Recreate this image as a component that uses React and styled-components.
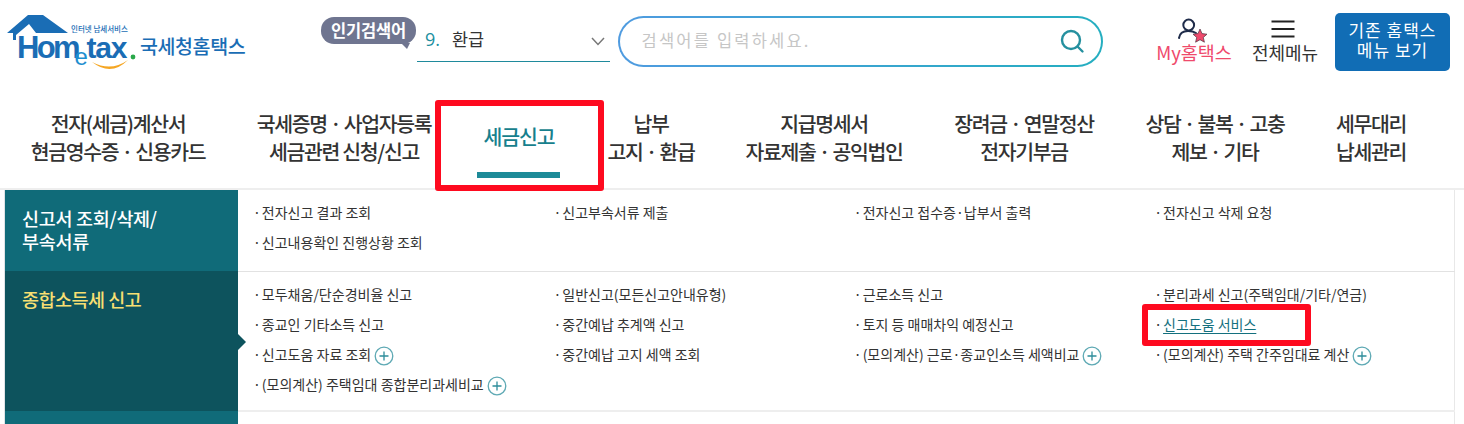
import React from "react";
import styled, { createGlobalStyle } from "styled-components";

const Global = createGlobalStyle`
  html, body { margin: 0; padding: 0; background: #fff; }
  body { width: 1464px; height: 424px; overflow: hidden; font-family: "Noto Sans CJK KR", "Noto Sans", sans-serif; color: #333; }
  #root { width: 1464px; height: 424px; overflow: hidden; }
  * { box-sizing: border-box; }
`;

const Page = styled.div`
  position: relative;
  width: 1464px;
  height: 424px;
  overflow: hidden;
`;

/* ---- top bar ---- */
const TopBar = styled.header`
  display: flex;
  align-items: flex-start;
  height: 89px;
  padding: 12px 14px 0 7px;
`;
const LogoWrap = styled.a`
  display: block;
  width: 314px;
  height: 62px;
  flex: none;
`;
const Popular = styled.div`
  display: flex;
  align-items: flex-start;
  width: 289px;
  flex: none;
`;
const Bubble = styled.div`
  position: relative;
  width: 95px;
  height: 27px;
  margin-top: 5px;
  margin-right: 1px;
  border-radius: 13px;
  background: #6f7590;
  color: #fff;
  font-size: 16.5px;
  font-weight: 700;
  line-height: 26px;
  text-align: center;
  letter-spacing: -0.2px;
  flex: none;
  &::after {
    content: "";
    position: absolute;
    right: 6px;
    bottom: -5px;
    border-top: 6px solid #6f7590;
    border-left: 6px solid transparent;
    border-right: 3px solid transparent;
  }
`;
const Select = styled.div`
  display: flex;
  align-items: center;
  width: 193px;
  height: 50px;
  border-bottom: 1px solid #1f8a9c;
  padding: 4px 5px 0 8px;
  flex: none;
  svg { margin-top: 6px; }
`;
const Rank = styled.span`
  color: #1d8f9f;
  font-family: "Open Sans", sans-serif;
  width: 27px;
  font-size: 18px;
`;
const Keyword = styled.span`
  flex: 1;
  color: #333;
  font-size: 17.5px;
`;
const SearchBox = styled.div`
  display: flex;
  align-items: center;
  width: 485px;
  height: 51px;
  margin-top: 4px;
  margin-left: 8px;
  padding: 0 16px 2px 21.5px;
  border-radius: 26px;
  border: 2.5px solid transparent;
  background:
    linear-gradient(#fff, #fff) padding-box,
    linear-gradient(90deg, #4f9be0, #24aec0) border-box;
  flex: none;
`;
const Placeholder = styled.span`
  flex: 1;
  color: #c6c6c6;
  font-size: 16.5px;
  letter-spacing: 2.2px;
  padding-bottom: 2px;
`;
const Utility = styled.a`
  display: flex;
  flex-direction: column;
  align-items: center;
  flex: none;
  width: ${(p) => p.$w}px;
  margin-left: ${(p) => p.$ml}px;
  color: ${(p) => p.$color};
  font-size: ${(p) => p.$size}px;
  line-height: 20px;
  white-space: nowrap;
`;
const UtilityIcon = styled.div`
  height: 24px;
  margin-top: 6px;
  margin-right: ${(p) => p.$shift}px;
  svg { display: block; }
`;
const OldMenu = styled.a`
  display: block;
  flex: none;
  width: 115px;
  height: 58px;
  margin-left: 15px;
  margin-top: 1px;
  border-radius: 5px;
  background: #116db5;
  color: #fff;
  font-size: 17px;
  line-height: 20px;
  letter-spacing: 1px;
  text-align: center;
  padding-top: 7px;
`;

/* ---- main navigation ---- */
const Nav = styled.nav`
  display: flex;
  height: 101px;
  border-bottom: 2px solid #eeeeee;
  padding-top: 20px;
`;
const NavItem = styled.a`
  position: relative;
  flex: none;
  width: ${(p) => p.$w}px;
  color: ${(p) => (p.$active ? "#177f8d" : "#333")};
  font-size: 20.5px;
  font-weight: 500;
  line-height: 28px;
  letter-spacing: ${(p) => (p.$active ? -1.1 : -1.35)}px;
  text-align: center;
  white-space: nowrap;
  padding-top: ${(p) => (p.$active ? 13 : 0)}px;
  ${(p) =>
    p.$active &&
    `&::after {
      content: "";
      position: absolute;
      left: 25px;
      top: 63px;
      width: 83px;
      height: 6px;
      background: #1d8a98;
    }`}
`;

/* ---- sub menu panel ---- */
const Panel = styled.section`
  margin-left: 4px;
  width: 1451px;
  border-left: 1px solid #dfe3e6;
  border-right: 1px solid #e8e8e8;
`;
const Row = styled.div`
  display: flex;
  height: ${(p) => p.$h}px;
`;
const Side = styled.h3`
  position: relative;
  flex: none;
  width: 233px;
  margin: 0;
  padding: 17px 0 0 17px;
  background: ${(p) => (p.$active ? "#0d535d" : "#106b79")};
  color: ${(p) => (p.$active ? "#f7df72" : "#fff")};
  font-size: 18.5px;
  font-weight: 500;
  line-height: 23px;
  letter-spacing: ${(p) => (p.$active ? -0.5 : -0.3)}px;
  ${(p) =>
    p.$active &&
    `&::after {
      content: "";
      position: absolute;
      right: -8px;
      top: 63px;
      border-left: 8px solid #0d535d;
      border-top: 8px solid transparent;
      border-bottom: 8px solid transparent;
    }`}
`;
const Links = styled.ul`
  flex: 1;
  display: grid;
  grid-template-columns: repeat(4, 300.4px);
  grid-auto-rows: 30px;
  align-content: start;
  margin: 0 0 -1px;
  padding: ${(p) => (p.$line ? 7 : 8)}px 0 0 15px;
  list-style: none;
  border-bottom: ${(p) => (p.$line ? "1px solid #e2e2e2" : "2px solid #eeeeee")};
`;
const LinkItem = styled.li`
  display: flex;
  align-items: center;
  font-size: 14px;
  color: #333;
  white-space: nowrap;
  &::before {
    content: "·";
    margin-right: 1px;
  }
`;
const Current = styled.a`
  color: #14707e;
  text-decoration: underline;
  text-underline-offset: 3px;
  text-decoration-thickness: 1px;
`;
const Last = styled.div`
  height: 14px;
  width: 233px;
  background: #106b79;
`;

/* ---- annotation overlays ---- */
const Highlight = styled.div`
  position: absolute;
  left: ${(p) => p.$x}px;
  top: ${(p) => p.$y}px;
  width: ${(p) => p.$w}px;
  height: ${(p) => p.$h}px;
  border: ${(p) => p.$b}px solid #fe0a1f;
  border-radius: 3px;
`;

/* ---- drawings ---- */
const Logo = () => (
  <svg width="245" height="62" viewBox="0 0 245 62" style={{ display: "block" }}>
    <path d="M0 21 L21 3 H36 L61 21 H29 L22 12 L9 23 V28 H6 V21 Z" fill="#1a6db5" />
    <text x="10" y="46" fontFamily="Liberation Sans, sans-serif" fontWeight="700" fontSize="31" letterSpacing="-2.6" fill="#1a6db5">Hom</text>
    <text x="67.5" y="53" fontFamily="Liberation Sans, sans-serif" fontWeight="400" fontSize="24" letterSpacing="0" fill="#1f8fd0">e</text>
    <text x="79.5" y="46" fontFamily="Liberation Sans, sans-serif" fontWeight="700" fontSize="30" letterSpacing="-1.2" fill="#1a6db5">tax</text>
    <circle cx="126" cy="45" r="2.4" fill="#2aa84a" />
    <path d="M85 50 Q104 65 121 48 Q104 60 85 50 Z" fill="#f5a623" />
    <text x="64" y="20" fontFamily="Noto Sans CJK KR, sans-serif" fontSize="7.5" fontWeight="500" fill="#1a6db5">인터넷 납세서비스</text>
    <text x="133" y="42" fontFamily="Noto Sans CJK KR, sans-serif" fontSize="19.5" fontWeight="500" letterSpacing="-0.4" fill="#1a6db5">국세청홈택스</text>
  </svg>
);

const Chevron = () => (
  <svg width="14" height="9" viewBox="0 0 14 9">
    <path d="M1 1 L7 7.5 L13 1" fill="none" stroke="#777" strokeWidth="1.5" />
  </svg>
);

const SearchIcon = () => (
  <svg width="26" height="26" viewBox="0 0 26 26">
    <circle cx="12" cy="12" r="9" fill="none" stroke="#25909f" strokeWidth="2.4" />
    <path d="M18.5 18.5 L23.5 23.5" stroke="#25909f" strokeWidth="2.4" strokeLinecap="round" />
  </svg>
);

const UserStar = () => (
  <svg width="32" height="25" viewBox="0 0 32 25">
    <circle cx="12.7" cy="7" r="5.4" fill="none" stroke="#1f2c4a" strokeWidth="2" />
    <path d="M3 20 Q4 13 12 13 Q17 13 20 15" fill="none" stroke="#1f2c4a" strokeWidth="2" strokeLinecap="round" />
    <path d="M24 11 L26 15.6 L31 16.2 L27.3 19.4 L28.4 24.2 L24 21.7 L19.6 24.2 L20.7 19.4 L17 16.2 L22 15.6 Z" fill="#ef4a6c" stroke="#4a3340" strokeWidth="0.7" />
  </svg>
);

const Burger = () => (
  <svg width="24" height="24" viewBox="0 0 24 24">
    <path d="M0.5 3.5 H23.5 M0.5 11 H23.5 M0.5 18.5 H23.5" stroke="#222" strokeWidth="2" />
  </svg>
);

const PlusWrap = styled.svg`
  margin-left: 3px;
  margin-top: 3px;
  flex: none;
`;
const Plus = () => (
  <PlusWrap width="20" height="20" viewBox="0 0 20 20">
    <circle cx="10" cy="10" r="8.8" fill="none" stroke="#5ea9b4" strokeWidth="1.3" />
    <path d="M10 5.5 V14.5 M5.5 10 H14.5" stroke="#2d8d9b" strokeWidth="1.3" />
  </PlusWrap>
);

const nav = [
  [236, ["전자(세금)계산서", "현금영수증 · 신용카드"]],
  [216, ["국세증명 · 사업자등록", "세금관련 신청/신고"]],
  [134, ["세금신고"], true],
  [130, ["납부", "고지 · 환급"]],
  [216, ["지급명세서", "자료제출 · 공익법인"]],
  [184, ["장려금 · 연말정산", "전자기부금"]],
  [198, ["상담 · 불복 · 고충", "제보 · 기타"]],
  [114, ["세무대리", "납세관리"]],
];

const App = () => (
  <Page>
    <Global />
    <TopBar>
      <LogoWrap><Logo /></LogoWrap>
      <Popular>
        <Bubble>인기검색어</Bubble>
        <Select>
          <Rank>9.</Rank>
          <Keyword>환급</Keyword>
          <Chevron />
        </Select>
      </Popular>
      <SearchBox>
        <Placeholder>검색어를 입력하세요.</Placeholder>
        <SearchIcon />
      </SearchBox>
      <Utility $w={80} $ml={51} $size={18.5} $color="#ef4a6c">
        <UtilityIcon $shift={4}><UserStar /></UtilityIcon>
        My홈택스
      </Utility>
      <Utility $w={70} $ml={16} $size={18} $color="#333">
        <UtilityIcon $shift={5}><Burger /></UtilityIcon>
        전체메뉴
      </Utility>
      <OldMenu>기존 홈택스<br />메뉴 보기</OldMenu>
    </TopBar>
    <Nav>
      {nav.map(([w, lines, active], i) => (
        <NavItem key={i} $w={w} $active={active}>
          {lines.map((l) => <div key={l}>{l}</div>)}
        </NavItem>
      ))}
    </Nav>
    <Panel>
      <Row $h={81}>
        <Side>신고서 조회/삭제/<br />부속서류</Side>
        <Links $line>
          <LinkItem>전자신고 결과 조회</LinkItem>
          <LinkItem>신고부속서류 제출</LinkItem>
          <LinkItem>전자신고 접수증·납부서 출력</LinkItem>
          <LinkItem>전자신고 삭제 요청</LinkItem>
          <LinkItem>신고내용확인 진행상황 조회</LinkItem>
        </Links>
      </Row>
      <Row $h={140}>
        <Side $active>종합소득세 신고</Side>
        <Links>
          <LinkItem>모두채움/단순경비율 신고</LinkItem>
          <LinkItem>일반신고(모든신고안내유형)</LinkItem>
          <LinkItem>근로소득 신고</LinkItem>
          <LinkItem>분리과세 신고(주택임대/기타/연금)</LinkItem>
          <LinkItem>종교인 기타소득 신고</LinkItem>
          <LinkItem>중간예납 추계액 신고</LinkItem>
          <LinkItem>토지 등 매매차익 예정신고</LinkItem>
          <LinkItem><Current>신고도움 서비스</Current></LinkItem>
          <LinkItem>신고도움 자료 조회<Plus /></LinkItem>
          <LinkItem>중간예납 고지 세액 조회</LinkItem>
          <LinkItem>(모의계산) 근로·종교인소득 세액비교<Plus /></LinkItem>
          <LinkItem>(모의계산) 주택 간주임대료 계산<Plus /></LinkItem>
          <LinkItem>(모의계산) 주택임대 종합분리과세비교<Plus /></LinkItem>
        </Links>
      </Row>
      <Last />
    </Panel>
    <Highlight $x={435} $y={100} $w={169} $h={91} $b={6} />
    <Highlight $x={1142} $y={304} $w={169} $h={42} $b={6} />
  </Page>
);

export default App;
